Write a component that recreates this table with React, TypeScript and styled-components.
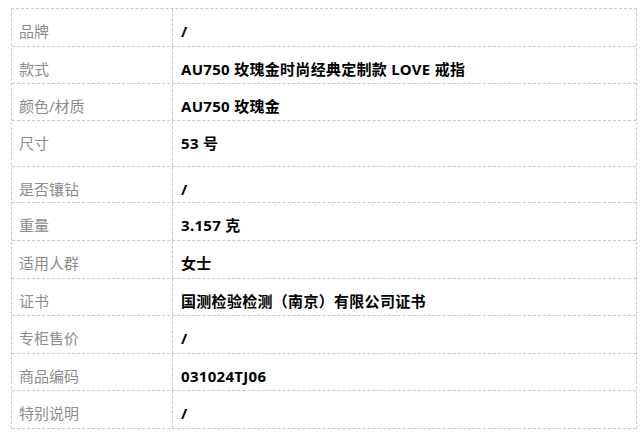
import styled, { createGlobalStyle } from 'styled-components'

const GlobalStyle = createGlobalStyle`
	html, body {
		margin: 0;
		padding: 0;
		background: #fff;
	}
	body {
		font-family: "Noto Sans", "Noto Sans CJK SC", sans-serif;
		font-size: 15px;
	}
`

interface Spec {
	label: string
	value: string
	height: number
}

const specs: Spec[] = [
	{ label: '品牌', value: '/', height: 38 },
	{ label: '款式', value: 'AU750 玫瑰金时尚经典定制款 LOVE 戒指', height: 37 },
	{ label: '颜色/材质', value: 'AU750 玫瑰金', height: 37 },
	{ label: '尺寸', value: '53 号', height: 46 },
	{ label: '是否镶钻', value: '/', height: 36 },
	{ label: '重量', value: '3.157 克', height: 38 },
	{ label: '适用人群', value: '女士', height: 38 },
	{ label: '证书', value: '国测检验检测（南京）有限公司证书', height: 37 },
	{ label: '专柜售价', value: '/', height: 38 },
	{ label: '商品编码', value: '031024TJ06', height: 37 },
	{ label: '特别说明', value: '/', height: 38 },
]

const App = () => {
	return (
		<Page>
			<GlobalStyle />
			<SpecTable>
				{specs.map((s) => (
					<Row key={s.label} $height={s.height}>
						<Label>{s.label}</Label>
						<Value>{s.value}</Value>
					</Row>
				))}
			</SpecTable>
		</Page>
	)
}

const Page = styled.div`
	padding: 8px 5px 0 11px;
`
const SpecTable = styled.div`
	width: 626px;
	border: 1px dashed #c8c8c8;
	border-bottom: none;
	box-sizing: border-box;
`
const Row = styled.div<{ $height: number }>`
	display: grid;
	grid-template-columns: 161px 1fr;
	height: ${(p) => p.$height}px;
	border-bottom: 1px dashed #c8c8c8;
	box-sizing: border-box;
`
const Cell = styled.div`
	padding: 12px 0 0 7px;
	line-height: 21px;
	white-space: nowrap;
`
const Label = styled(Cell)`
	color: #8c8c8c;
	border-right: 1px dashed #c8c8c8;
`
const Value = styled(Cell)`
	color: #000;
	font-weight: bold;
	letter-spacing: 0.3px;
	padding-left: 8px;
`

export default App
